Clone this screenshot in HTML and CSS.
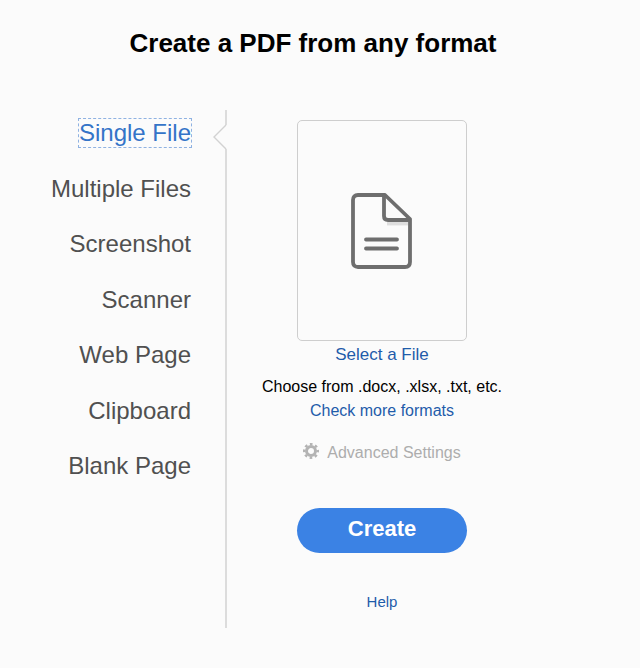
FILE: index.html
```
<!DOCTYPE html>
<html lang="en">
<head>
    <meta charset="UTF-8">
    <meta name="viewport" content="width=device-width, initial-scale=1.0">
    <title>Create a PDF</title>
    <link rel="stylesheet" href="styles.css">
</head>
<body>
    <main>
        <h1>Create a PDF from any format</h1>

        <div class="content">
            <nav>
                <ul class="sources">
                    <li class="selected">
                        <a href="#single">Single File</a>
                        <svg class="pointer" width="14" height="26" viewBox="0 0 14 26">
                            <path class="cover" d="M14 1L1 13L14 25Z"/>
                            <path d="M13 1L1 13L13 25" fill="none" stroke="#d2d2d2" stroke-width="1.4"/>
                        </svg>
                    </li>
                    <li><a href="#multiple">Multiple Files</a></li>
                    <li><a href="#screenshot">Screenshot</a></li>
                    <li><a href="#scanner">Scanner</a></li>
                    <li><a href="#web">Web Page</a></li>
                    <li><a href="#clipboard">Clipboard</a></li>
                    <li><a href="#blank">Blank Page</a></li>
                </ul>
            </nav>

            <section class="panel">
                <button class="drop-box" type="button" aria-label="Select a file">
                    <svg width="62" height="76" viewBox="0 0 62 76" fill="none" stroke="#6e6e6e" stroke-width="3.8" stroke-linecap="round" stroke-linejoin="round">
                        <path d="M36 30.5H57" stroke="#dedede" stroke-linecap="butt"/>
                        <path d="M7 2H34L59 26V69Q59 74 54 74H7Q2 74 2 69V7Q2 2 7 2Z"/>
                        <path d="M33 3V23Q33 27 37 27H58"/>
                        <path d="M15 46.5H46M15 55.5H46"/>
                    </svg>
                </button>
                <a class="select" href="#select">Select a File</a>
                <p>Choose from .docx, .xlsx, .txt, etc.</p>
                <a class="formats" href="#formats">Check more formats</a>
                <button class="settings" type="button" disabled>
                    <svg width="16" height="16" viewBox="0 0 16 16" fill="none" stroke="#b3b3b3">
                        <circle cx="8" cy="8" r="4.5" stroke-width="3"/>
                        <circle cx="8" cy="8" r="6.8" stroke-width="2.4" stroke-dasharray="2.67 2.67" stroke-dashoffset="1.335"/>
                    </svg>
                    Advanced Settings
                </button>
                <button class="create" type="button">Create</button>
                <a class="help" href="#help">Help</a>
            </section>
        </div>
    </main>
</body>
</html>
```
FILE: styles.css
```
body {
    margin: 0;
    background-color: #fbfbfb;
    font-family: "Liberation Sans", Arial, sans-serif;
    font-size: 16px;
    color: #111;
}

main {
    padding: 28px 14px 40px 0;
}

h1 {
    margin: 0 0 52px;
    font-size: 26px;
    line-height: 30px;
    text-align: center;
    color: #000;
}

a {
    color: #1f5caa;
    text-decoration: none;
}

button {
    font-family: inherit;
    border: none;
    background: none;
    cursor: pointer;
}

.content {
    display: grid;
    grid-template-columns: 227px 1fr;
}

nav {
    display: flex;
    box-sizing: border-box;
    padding: 9px 34px 148px 0;
    border-right: 2px solid #dcdcdc;
}

.sources {
    display: flex;
    flex: 1;
    flex-direction: column;
    justify-content: space-between;
    margin: 0;
    padding: 0;
    list-style: none;
    font-size: 24px;
    line-height: 28px;
    text-align: right;
}

.sources li {
    position: relative;
}

.sources a {
    display: inline-block;
    color: #505050;
}

.sources .selected a {
    color: #3474c8;
    outline: 1px dashed #8fb2e2;
}

/* Arrow that breaks the divider line next to the selected source */
.pointer {
    position: absolute;
    top: 5px;
    right: -36px;
}

.pointer .cover {
    fill: #fbfbfb;
    stroke: #fbfbfb;
}

.panel {
    display: flex;
    flex-direction: column;
    align-items: center;
    padding: 10px 89px 16px 0;
}

.drop-box {
    display: flex;
    align-items: center;
    justify-content: center;
    width: 170px;
    height: 221px;
    border: 1px solid #cecece;
    border-radius: 5px;
}

.select {
    margin-top: 4px;
    font-size: 17px;
    line-height: 20px;
}

p {
    margin: 12px 0 4px;
    line-height: 20px;
    color: #000;
}

.formats {
    line-height: 20px;
}

.settings {
    display: flex;
    align-items: flex-start;
    gap: 8px;
    margin-top: 22px;
    padding: 0;
    font-size: 16px;
    line-height: 20px;
    color: #adadad;
    cursor: default;
}

.create {
    width: 170px;
    height: 45px;
    margin-top: 45px;
    padding: 0 0 3px;
    border-radius: 24px;
    background-color: #3b82e4;
    font-size: 22px;
    font-weight: bold;
    color: #fff;
}

.help {
    margin-top: 39px;
    font-size: 15px;
    line-height: 20px;
}
```
